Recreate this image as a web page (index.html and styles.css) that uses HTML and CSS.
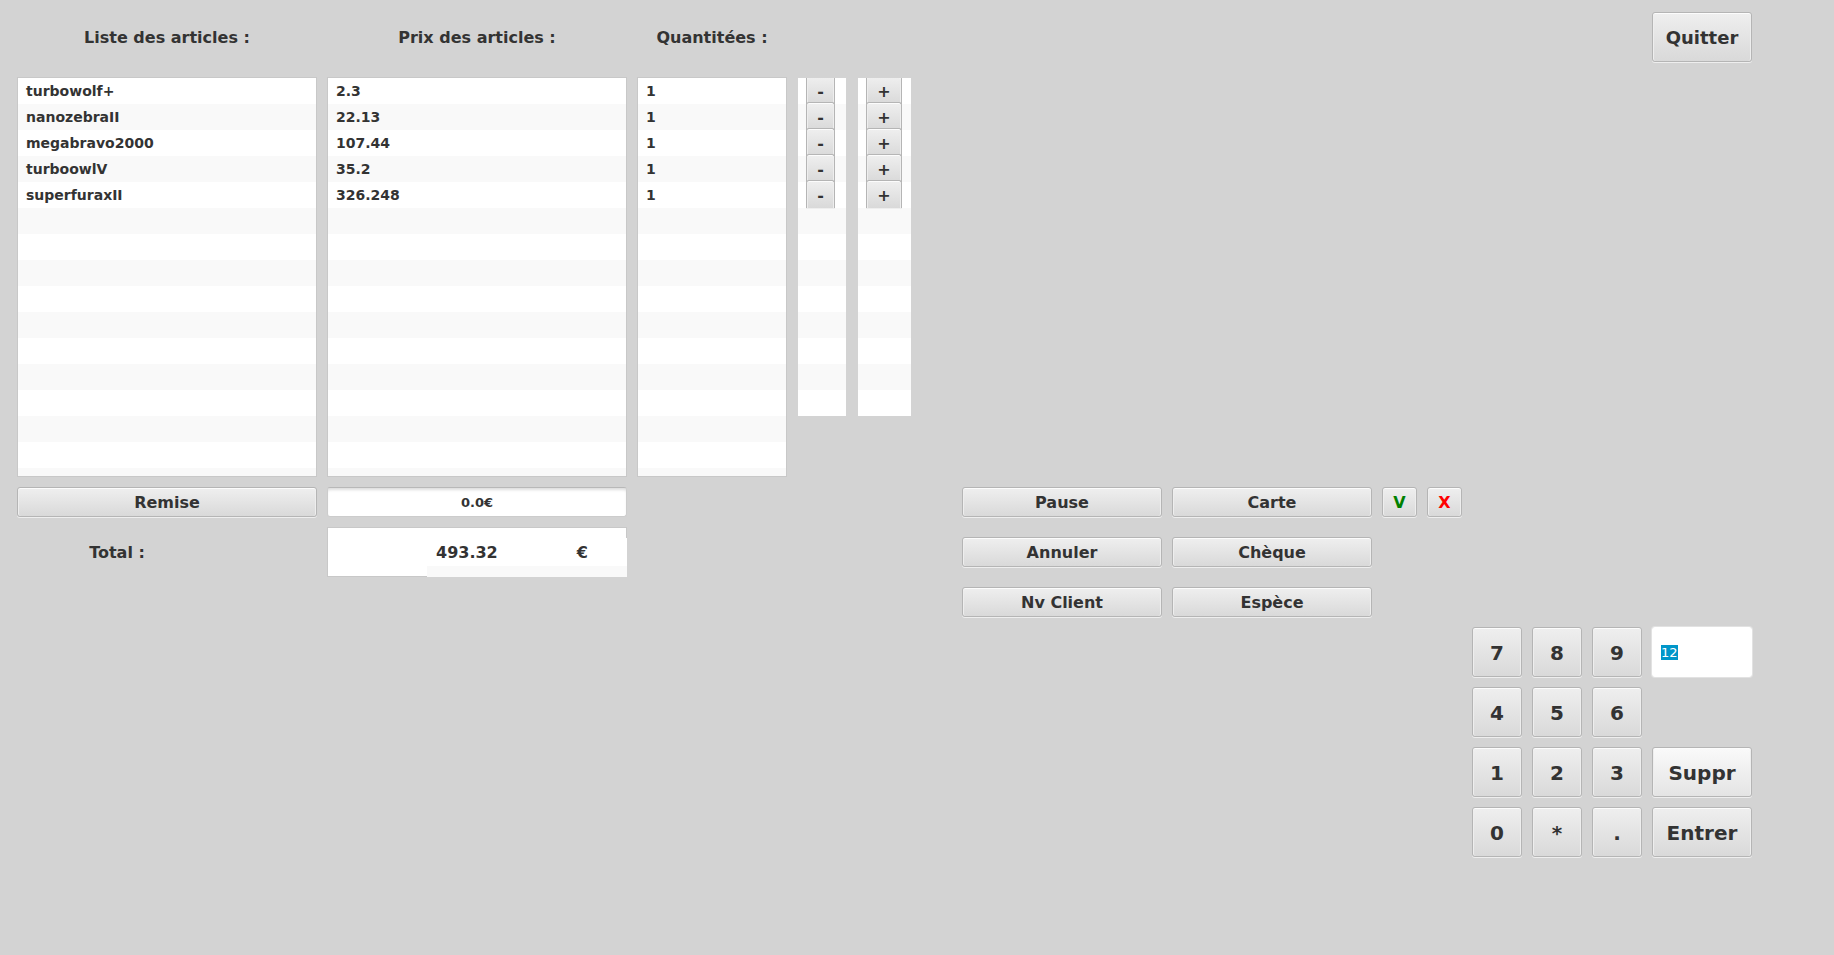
FILE: index.html
```html
<!DOCTYPE html>
<html lang="fr">
<head>
<meta charset="utf-8">
<title>Caisse</title>
<link rel="stylesheet" href="styles.css">
</head>
<body>
<main class="register">
  <h2 class="heading col-name">Liste des articles :</h2>
  <h2 class="heading col-price">Prix des articles :</h2>
  <h2 class="heading col-qty">Quantitées :</h2>
  <button class="btn large quit">Quitter</button>

  <ul class="list framed col-name">
    <li>turbowolf+</li><li>nanozebraII</li><li>megabravo2000</li><li>turboowlV</li><li>superfuraxII</li>
  </ul>
  <ul class="list framed col-price">
    <li>2.3</li><li>22.13</li><li>107.44</li><li>35.2</li><li>326.248</li>
  </ul>
  <ul class="list framed col-qty">
    <li>1</li><li>1</li><li>1</li><li>1</li><li>1</li>
  </ul>
  <ul class="list steps col-minus">
    <li><button class="btn step">-</button></li><li><button class="btn step">-</button></li><li><button class="btn step">-</button></li><li><button class="btn step">-</button></li><li><button class="btn step">-</button></li>
  </ul>
  <ul class="list steps col-plus">
    <li><button class="btn step plus">+</button></li><li><button class="btn step plus">+</button></li><li><button class="btn step plus">+</button></li><li><button class="btn step plus">+</button></li><li><button class="btn step plus">+</button></li>
  </ul>

  <button class="btn row-discount col-name">Remise</button>
  <input class="field discount row-discount col-price" type="text" value="0.0€" aria-label="Remise">
  <button class="btn row-discount col-action">Pause</button>
  <button class="btn row-discount col-payment">Carte</button>
  <button class="btn row-discount accept">V</button>
  <button class="btn row-discount refuse">X</button>

  <div class="total-label row-total col-name">Total :</div>
  <div class="total row-total col-price">
    <div class="total-value"><span>493.32</span><span class="currency">€</span></div>
  </div>
  <button class="btn row-total col-action">Annuler</button>
  <button class="btn row-total col-payment">Chèque</button>

  <button class="btn row-client col-action">Nv Client</button>
  <button class="btn row-client col-payment">Espèce</button>

  <section class="keypad" aria-label="Pavé numérique">
    <button class="btn large">7</button><button class="btn large">8</button><button class="btn large">9</button>
    <input class="field entry" type="text" value="12" aria-label="Saisie">
    <button class="btn large">4</button><button class="btn large">5</button><button class="btn large">6</button>
    <button class="btn large line-start">1</button><button class="btn large">2</button><button class="btn large">3</button>
    <button class="btn large active">Suppr</button>
    <button class="btn large">0</button><button class="btn large">*</button><button class="btn large">.</button>
    <button class="btn large">Entrer</button>
  </section>
</main>
<script src="script.js"></script>
</body>
</html>
```
FILE: styles.css
```css
* { box-sizing: border-box; }

body {
  margin: 0;
  background: #d3d3d3;
  color: #333;
  font: bold 14px/26px "DejaVu Sans", sans-serif;
}

.register {
  display: grid;
  grid-template-columns:
    minmax(0, 300fr) minmax(0, 300fr) minmax(0, 150fr) 50px 55px minmax(0, 30fr)
    minmax(0, 200fr) minmax(0, 200fr) 35px 35px 50px 50px 50px 100px;
  grid-template-rows: 55px auto auto auto auto auto;
  gap: 10px;
  padding: 12px 82px 12px 17px;
}

.col-name { grid-column: 1; }
.col-price { grid-column: 2; }
.col-qty { grid-column: 3; }
.col-minus { grid-column: 4; }
.col-plus { grid-column: 5; }
.col-action { grid-column: 7; }
.col-payment { grid-column: 8; }
.row-discount { grid-row: 3; }
.row-total { grid-row: 4; }
.row-client { grid-row: 5; }

.heading {
  grid-row: 1;
  margin: 0;
  font-size: 16px;
  line-height: 52px;
  text-align: center;
  white-space: nowrap;
}

.btn {
  align-self: center;
  height: 30px;
  padding: 0;
  border: 1px solid #b5b5b5;
  border-radius: 3px;
  background: linear-gradient(#efefef, #d9d9d9);
  box-shadow: inset 0 1px #fcfcfc, inset 1px 0 #eee, inset -1px 0 #eee, 0 1px #eee;
  color: #333;
  font: bold 16px "DejaVu Sans", sans-serif;
}

.large {
  height: 50px;
  padding-top: 1px;
  font-size: 20px;
}

.active { background: linear-gradient(#fafafa, #e4e4e4); }
.quit { grid-area: 1 / 14; align-self: start; font-size: 18px; }
.accept { grid-column: 9; color: #008000; }
.refuse { grid-column: 10; color: #f00; }

.list {
  grid-row: 2;
  margin: 0;
  padding: 0;
  overflow: hidden;
  list-style: none;
  background: repeating-linear-gradient(#fff 0 26px, #f9f9f9 26px 52px);
}

.list li { height: 26px; padding: 0 8px; }

.framed {
  min-height: 400px;
  border: 1px solid #c8c8c8;
}

.steps {
  align-self: start;
  min-height: 338px;
  margin: 1px;
}

.step {
  display: block;
  position: relative;
  top: -2px;
  width: 29px;
  height: 28px;
  padding-top: 2px;
  border-bottom: 0;
  border-radius: 3px 3px 0 0;
}

.plus { width: 36px; }

.field {
  min-width: 0;
  width: 100%;
  border: 1px solid #c8c8c8;
  border-radius: 3px;
  background: #fff;
  color: #333;
  font: bold 13px "DejaVu Sans", sans-serif;
  outline: none;
}

.discount {
  height: 30px;
  border-color: #b8b8b8 #ccc #ccc;
  box-shadow: inset 0 3px 3px -1px #ddd;
  text-align: center;
}

.total-label {
  width: 200px;
  font-size: 16px;
  line-height: 52px;
  text-align: center;
}

.total {
  position: relative;
  height: 50px;
  border: 1px solid #c8c8c8;
  background: #fff;
}

.total-value {
  position: absolute;
  right: -1px;
  bottom: -1px;
  display: flex;
  justify-content: space-between;
  width: 200px;
  height: 39px;
  padding: 0 39px 0 9px;
  background: linear-gradient(#fff 28px, #f9f9f9 28px);
  font-size: 16px;
  line-height: 30px;
}

.total-label, .heading { height: 50px; }

.keypad {
  grid-area: 6 / 11 / 7 / 15;
  display: grid;
  grid-template-columns: 50px 50px 50px 100px;
  gap: 10px;
}

.line-start { grid-column: 1; }

.entry {
  height: 50px;
  padding: 0 8px;
  border-color: #fff;
  box-shadow: 0 0 0 1px #e2e2e2;
  font-weight: normal;
}

.entry::selection { background: #0096c9; color: #fff; }
```
FILE: script.js
```js
document.querySelector(".entry").select();
```
